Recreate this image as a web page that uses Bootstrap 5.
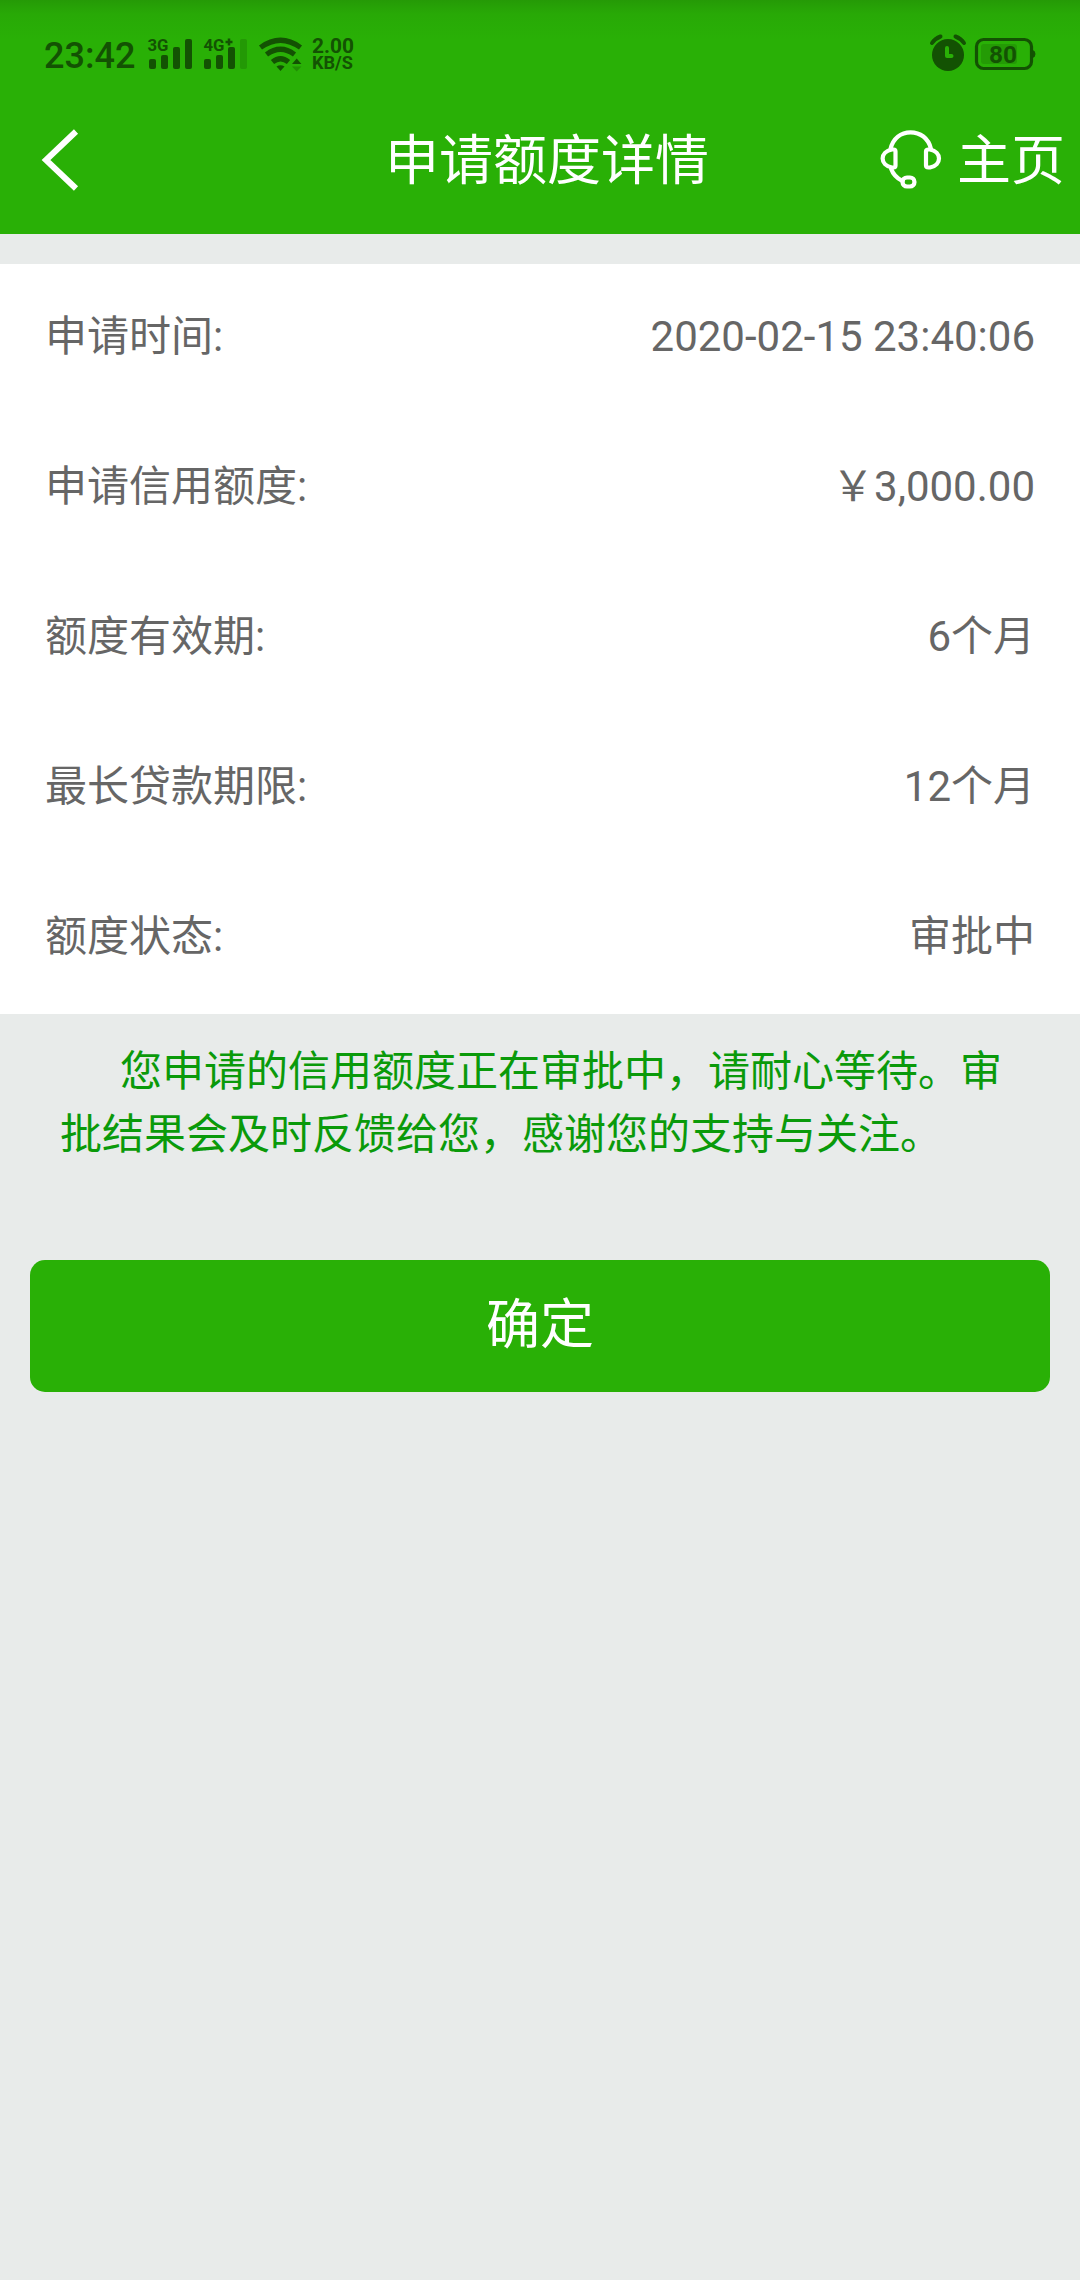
<!DOCTYPE html>
<html lang="zh-CN">
<head>
<meta charset="utf-8">
<meta name="viewport" content="width=device-width, initial-scale=1">
<title>申请额度详情</title>
<link href="https://cdn.jsdelivr.net/npm/bootstrap@5.3.0/dist/css/bootstrap.min.css" rel="stylesheet">
<style>
  body { background: #e8ebea; color: #666; font-family: Roboto, "Noto Sans CJK SC", sans-serif; font-size: 42px; line-height: 63px; }
  .app-head { background: linear-gradient(#259a06 0, #28a906 14px, #29b006 40px); height: 234px; color: #fff; }
  .status-row { height: 84px; color: #135203; }
  .status-row svg, .title-row svg { display: block; flex: none; }
  .clock-text { font-size: 36px; font-weight: 500; line-height: 42px; width: 100px; padding: 35px 0 0 44px; white-space: nowrap; }
  .title-row { height: 150px; font-size: 54px; line-height: 80px; }
  .title-side { width: 240px; }
  .title-label { padding: 6px 0 0 14px; }
  .home-label { padding-top: 6px; margin-left: -1px; }
  .detail-list { margin-top: 30px; }
  .detail-item { height: 150px; padding: 0 45px 6px; }
  .notice-text { color: #0a9a0a; padding: 26px 60px 0; text-indent: 60px; }
  .ok-wrap { padding: 94px 30px 0; }
  .ok-btn, .ok-btn:hover { background: #29b006; color: #fff; height: 132px; border: 0; border-radius: 15px; font-size: 54px; line-height: 80px; }
</style>
</head>
<body>
<header class="app-head">
  <div class="status-row d-flex justify-content-between">
    <div class="d-flex">
      <div class="clock-text">23:42</div>
      <svg width="260" height="84" viewBox="100 0 260 84" fill="currentColor" font-family="Roboto, sans-serif" font-weight="700">
        <text x="147.500" y="51" font-size="17" textLength="21" lengthAdjust="spacingAndGlyphs">3G</text>
        <rect x="149" y="59" width="7" height="10" rx="2"/><rect x="161" y="55" width="7" height="14" rx="2"/>
        <rect x="173" y="47" width="7" height="22" rx="2"/><rect x="185" y="39" width="7" height="30" rx="2"/>
        <text x="203.500" y="51" font-size="17" textLength="21" lengthAdjust="spacingAndGlyphs">4G</text>
        <path d="M229 38.500v7M225.500 42h7" stroke="currentColor" stroke-width="2.500"/>
        <rect x="204" y="59" width="7" height="10" rx="2"/><rect x="216" y="55" width="7" height="14" rx="2"/>
        <rect x="228" y="47" width="7" height="22" rx="2"/><rect x="240" y="39" width="7" height="30" rx="2" opacity=".25"/>
        <g fill="none" stroke="currentColor" stroke-width="5.200">
          <path d="M260.500 47.500Q280.500 33 300.500 47.500"/><path d="M266.500 54.500Q280.500 44 294.500 54.500"/><path d="M272.500 62Q280.500 55.500 288.500 62"/>
        </g>
        <path d="M276.500 66.500q4-2.500 8 0l-4 4.500z"/>
        <path d="M292 64l4.700-5.500 4.700 5.500z"/><path d="M292 66.500l4.700 5 4.700-5z" opacity=".35"/>
        <text x="312" y="53" font-size="21" textLength="42" lengthAdjust="spacingAndGlyphs">2.00</text>
        <text x="312" y="69" font-size="18" textLength="41" lengthAdjust="spacingAndGlyphs">KB/S</text>
      </svg>
    </div>
    <svg width="160" height="84" viewBox="920 0 160 84">
      <circle cx="948" cy="55" r="16" fill="currentColor"/>
      <path d="M947 48v8h4.500" fill="none" stroke="#29b006" stroke-width="4" stroke-linecap="round" stroke-linejoin="round"/>
      <path d="M932 43q3-4.500 8.500-6.500M955.500 36.500q5.500 2 8.500 6.500" fill="none" stroke="currentColor" stroke-width="4" stroke-linecap="round"/>
      <rect x="976.500" y="39.500" width="55" height="29" rx="7" fill="none" stroke="currentColor" stroke-width="3.200"/>
      <rect x="981" y="44" width="36" height="20" rx="3" fill="currentColor" opacity=".22"/>
      <path d="M1032 50.500a3 3.500 0 0 1 0 7z" fill="currentColor" stroke="currentColor"/>
      <text x="989" y="62.500" font-family="Roboto, sans-serif" font-weight="700" font-size="23" textLength="28" lengthAdjust="spacingAndGlyphs" fill="currentColor">80</text>
    </svg>
  </div>
  <div class="title-row d-flex align-items-center justify-content-between">
    <div class="title-side">
      <svg width="100" height="150" viewBox="0 84 100 150" fill="none" stroke="#fff" stroke-width="6"><path d="M76 131.500L46 160L76 188.500"/></svg>
    </div>
    <div class="title-label text-nowrap">申请额度详情</div>
    <div class="title-side d-flex align-items-center">
      <svg width="118" height="150" viewBox="840 84 118 150" fill="none" stroke="#fff" stroke-width="4.200" stroke-linecap="round">
        <path d="M890.500 149C893 138 901 132.300 910.500 132.300S928.500 138 931 149"/>
        <path d="M892 149.500h1.500q2 0 2 2v14q0 2-2 2H892C879.500 165 879.500 152 892 149.500z"/>
        <path d="M930 149.500h-1.500q-2.500 0-2.500 2v14q0 2 2.500 2h1.500C942 165 942 152 930 149.500z"/>
        <path d="M891 168.500Q894 177 902.500 181"/><rect x="902.500" y="177.500" width="12" height="9" rx="4.500"/>
      </svg>
      <div class="home-label text-nowrap">主页</div>
    </div>
  </div>
</header>
<main>
  <div class="detail-list bg-white">
    <div class="detail-item d-flex align-items-center justify-content-between"><span>申请时间:</span><span>2020-02-15 23:40:06</span></div>
    <div class="detail-item d-flex align-items-center justify-content-between"><span>申请信用额度:</span><span>￥3,000.00</span></div>
    <div class="detail-item d-flex align-items-center justify-content-between"><span>额度有效期:</span><span>6个月</span></div>
    <div class="detail-item d-flex align-items-center justify-content-between"><span>最长贷款期限:</span><span>12个月</span></div>
    <div class="detail-item d-flex align-items-center justify-content-between"><span>额度状态:</span><span>审批中</span></div>
  </div>
  <p class="notice-text mb-0">您申请的信用额度正在审批中，请耐心等待。审批结果会及时反馈给您，感谢您的支持与关注。</p>
  <div class="ok-wrap"><button type="button" class="btn ok-btn w-100">确定</button></div>
</main>
<script src="https://cdn.jsdelivr.net/npm/bootstrap@5.3.0/dist/js/bootstrap.bundle.min.js"></script>
</body>
</html>
